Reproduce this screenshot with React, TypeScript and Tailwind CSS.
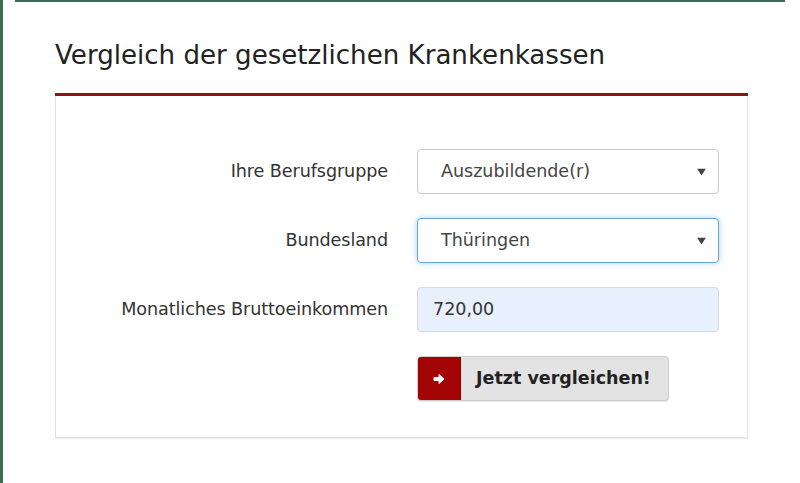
const font = { fontFamily: "'DejaVu Sans', Verdana, sans-serif" };

function Field({ label, children }: { label: string; children: React.ReactNode }) {
  return (
    <div className="flex items-center">
      <div className="w-[361px] pr-[29px] text-right text-[17.6px] tracking-[-0.1px] text-[#333] whitespace-nowrap">{label}</div>
      {children}
    </div>
  );
}

function Caret() {
  return (
    <svg width="9" height="7" viewBox="0 0 9 7" className="absolute right-[12px] top-1/2 -translate-y-1/2">
      <path d="M0 0 H9 L4.5 7 Z" fill="#444" />
    </svg>
  );
}

export default function App() {
  return (
    <div className="w-[800px] h-[483px] bg-white overflow-hidden" style={font}>
      <div className="h-full border-l-[3px] border-[#3d6b55]">
        <div className="ml-[12px] mr-[15px] h-[2px] bg-[#3d6b55]" />
        <div className="pl-[52px] pr-[52px] pt-[37px]">
          <h1 className="text-[26.1px] leading-[32px] text-[#222]">
            Vergleich der gesetzlichen Krankenkassen
          </h1>
          <div className="mt-[22px] h-[3px] bg-[#8b1515]" />
          <div className="border border-t-0 border-[#e3e3e3] shadow-[0_1px_1px_rgba(0,0,0,0.08)] pt-[53px] pb-[36px] flex flex-col gap-[24px]">
            <Field label="Ihre Berufsgruppe">
              <div className="relative w-[302px] h-[45px] rounded-[4px] border border-[#cccccc] bg-white flex items-center pl-[23px] text-[17.5px] text-[#444]">
                Auszubildende(r)
                <Caret />
              </div>
            </Field>
            <Field label="Bundesland">
              <div className="relative w-[302px] h-[45px] rounded-[4px] border border-[#66a3d9] shadow-[0_0_6px_rgba(102,175,233,0.55)] bg-white flex items-center pl-[23px] text-[17.5px] text-[#444]">
                Thüringen
                <Caret />
              </div>
            </Field>
            <Field label="Monatliches Bruttoeinkommen">
              <div className="w-[302px] h-[45px] rounded-[4px] border border-[#d5dbe3] bg-[#e8f0fe] flex items-center pl-[15px] text-[17.5px] text-[#333]">
                720,00
              </div>
            </Field>
            <div className="flex pl-[361px]">
              <button className="flex h-[45px] w-[252px] rounded-[4px] overflow-hidden border border-[#cfcfcf] bg-[#e3e3e3] shadow-[0_1px_1px_rgba(0,0,0,0.1)]">
                <span className="w-[43px] h-full bg-[#a30505] border-r border-[#8a0404] flex items-center justify-center">
                  <svg width="12" height="12" viewBox="0 0 12 12">
                    <path d="M1 4.5 H6 V1.5 L11 6 L6 10.5 V7.5 H1 Z" fill="white" stroke="white" strokeWidth="1" strokeLinejoin="round" />
                  </svg>
                </span>
                <span className="flex-1 flex items-center pl-[15px] text-[17.5px] font-bold text-[#222] whitespace-nowrap">
                  Jetzt vergleichen!
                </span>
              </button>
            </div>
          </div>
        </div>
      </div>
    </div>
  );
}
